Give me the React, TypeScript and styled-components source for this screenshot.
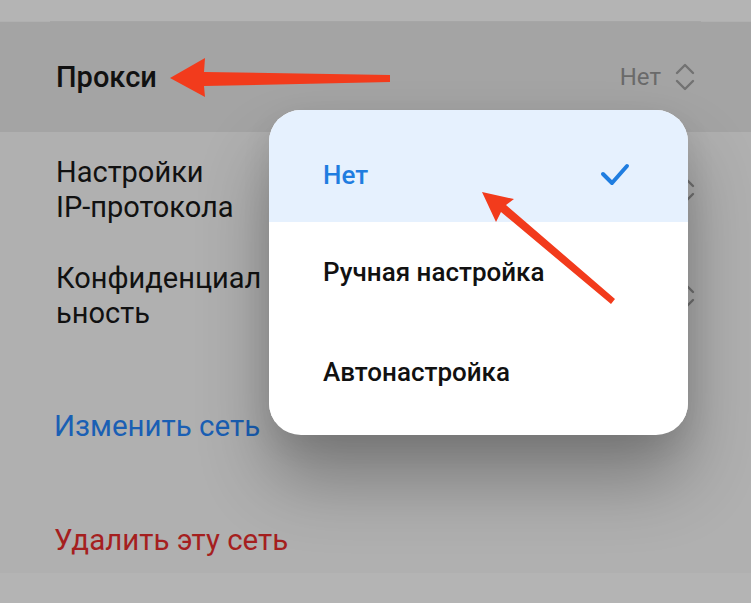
import React from 'react'
import styled, { createGlobalStyle } from 'styled-components'

const GlobalStyle = createGlobalStyle`
    html, body {
        margin: 0;
        padding: 0;
        background: #b4b4b4;
    }
    body {
        font-family: Roboto, "Noto Sans", "Liberation Sans", sans-serif;
    }
`

const Page = styled.div`
    position: relative;
    width: 751px;
    height: 603px;
    overflow: hidden;
    background: #b4b4b4;
    padding-top: 21px;
    box-sizing: border-box;
`

const Card = styled.div`
    display: flex;
    flex-direction: column;
    height: 552px;
    background: #b0b0b0;
`

const Divider = styled.div`
    height: 1px;
    margin: 0 50px;
    background: #a6a6a6;
`

const Row = styled.div<{ h: number; pressed?: boolean }>`
    display: flex;
    align-items: center;
    justify-content: space-between;
    height: ${p => p.h}px;
    flex-shrink: 0;
    padding: 0 56px;
    background: ${p => (p.pressed ? '#a4a4a4' : 'transparent')};
`

const Label = styled.div<{ bold?: boolean }>`
    font-size: 29px;
    line-height: 35px;
    font-weight: ${p => (p.bold ? 500 : 400)};
    color: #111;
`

const Action = styled.div<{ color: string }>`
    margin-left: -2px;
    font-size: 29.5px;
    font-weight: 400;
    color: ${p => p.color};
`

const Value = styled.div`
    display: flex;
    align-items: center;
    gap: 14px;
    font-size: 24px;
    color: #6a6a6a;
`

const Dialog = styled.div`
    position: absolute;
    left: 269px;
    top: 110px;
    width: 419px;
    height: 325px;
    background: #fff;
    border-radius: 32px;
    overflow: hidden;
    box-shadow: 0 45px 70px rgba(0, 0, 0, 0.3), 0 10px 30px rgba(0, 0, 0, 0.08);
    display: flex;
    flex-direction: column;
`

const Option = styled.div<{ selected?: boolean; h: number; top?: number }>`
    display: flex;
    align-items: center;
    justify-content: space-between;
    height: ${p => p.h}px;
    box-sizing: border-box;
    padding: ${p => p.top || 0}px 58px 0 54px;
    background: ${p => (p.selected ? '#e6f1fe' : '#fff')};
    color: ${p => (p.selected ? '#1f7de0' : '#111')};
    font-size: 26px;
    font-weight: 500;
`

const Overlay = styled.svg`
    position: absolute;
    left: 0;
    top: 0;
    pointer-events: none;
`

const Chevrons = () => (
    <svg width="20" height="30" viewBox="0 0 20 30" fill="none" stroke="#727272" strokeWidth="2.4" strokeLinecap="round" strokeLinejoin="round">
        <path d="M2 11 L10 3 L18 11" />
        <path d="M2 19 L10 27 L18 19" />
    </svg>
)

const Check = () => (
    <svg width="30" height="24" viewBox="0 0 30 24" fill="none" stroke="#1f7de0" strokeWidth="4" strokeLinecap="round" strokeLinejoin="round">
        <path d="M3 11 L12 20 L27 3" />
    </svg>
)

const App: React.FC = () => {
    return (
        <>
            <GlobalStyle />
            <Page>
                <Card>
                    <Divider />
                    <Row h={110} pressed>
                        <Label bold>Прокси</Label>
                        <Value>
                            Нет
                            <Chevrons />
                        </Value>
                    </Row>
                    <Row h={116}>
                        <Label>
                            Настройки
                            <br />
                            IP-протокола
                        </Label>
                        <Chevrons />
                    </Row>
                    <Row h={96}>
                        <Label>
                            Конфиденциал
                            <br />
                            ьность
                        </Label>
                        <Chevrons />
                    </Row>
                    <Row h={164}>
                        <Action color="#1a5fb4">Изменить сеть</Action>
                    </Row>
                    <Row h={64}>
                        <Action color="#a51f1f">Удалить эту сеть</Action>
                    </Row>
                </Card>

                <Dialog>
                    <Option selected h={112} top={18}>
                        Нет
                        <Check />
                    </Option>
                    <Option h={100}>Ручная настройка</Option>
                    <Option h={100}>Автонастройка</Option>
                </Dialog>

                <Overlay width="751" height="603" viewBox="0 0 751 603">
                    <polygon fill="#f23b1c" points="170,78 205,58 204,72 390,75 390,82 204,86 205,97" />
                    <polygon fill="#f23b1c" points="482,192 514,199 506,205 615,299 611,304 501,212 496,222" />
                </Overlay>
            </Page>
        </>
    )
}

export default App
